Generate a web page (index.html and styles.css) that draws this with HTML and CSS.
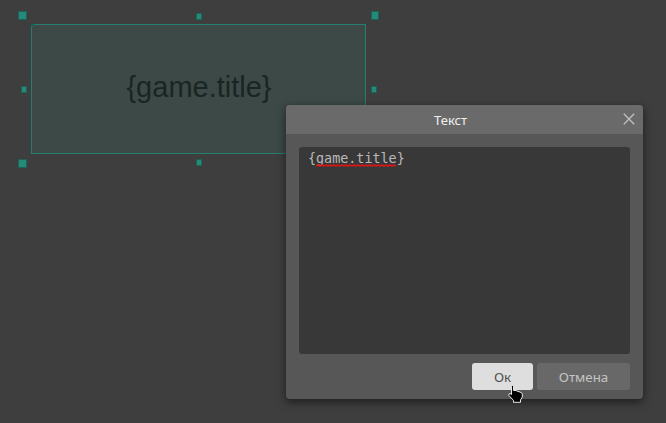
FILE: index.html
```
<!DOCTYPE html>
<html lang="ru">
<head>
<meta charset="utf-8">
<title>Текст</title>
<link rel="stylesheet" href="styles.css">
</head>
<body>
<main class="canvas">
  <div class="text-node"><span class="node-label">{game.title}</span><i class="origin"></i></div>
  <i class="handle corner nw"></i>
  <i class="handle corner ne"></i>
  <i class="handle corner sw"></i>
  <i class="handle edge n"></i>
  <i class="handle edge s"></i>
  <i class="handle edge w"></i>
  <i class="handle edge e"></i>
  <section class="dialog">
    <header class="dialog-header">
      <h1 class="dialog-title">Текст</h1>
      <svg class="close" viewBox="0 0 12 12"><path d="M.8.8 11.2 11.2M11.2.8.8 11.2"/></svg>
    </header>
    <div class="dialog-body">
      <div class="editor">{<span class="misspelled">game.title<svg class="squiggle" viewBox="0 0 80 3"><defs><pattern id="wave" width="4" height="3" patternUnits="userSpaceOnUse"><path d="M-1 1.5 0 2.3 2 .7 4 2.3 5 1.5"/></pattern></defs><rect width="80" height="3" fill="url(#wave)" stroke="none"/></svg></span>}</div>
      <footer class="actions">
        <button class="button primary">Ок</button>
        <button class="button">Отмена</button>
      </footer>
    </div>
  </section>
  <svg class="cursor" viewBox="0 0 15 18"><path d="M3.5 1.5Q4.5-.5 5.5 1.5V5.5L8 5.5 10 6.5 12 7 14.3 8.5V12L12.5 15V17.3H5.5V15.5L1 10.5Q.2 8.5 2 8.5L3.5 9.5Z"/></svg>
</main>
</body>
</html>
```

FILE: styles.css
```
* { box-sizing: border-box; }
body { margin: 0; background: #3e3e3e; font-family: "Noto Sans", "Open Sans", sans-serif; }
.canvas { position: relative; width: 666px; height: 423px; overflow: hidden; }

.text-node {
  position: absolute; left: 31px; top: 24px; width: 335px; height: 130px;
  display: flex; align-items: center; justify-content: center;
  background: #3c4946; border: 1px solid #267e70;
}
.node-label { padding: 0 0 4px 1px; font: 29px/34px "Liberation Sans", Arial, sans-serif; color: #182623; }
.origin { position: absolute; left: -1px; top: -1px; width: 3px; height: 3px; background: #1c6259; }

.handle { position: absolute; background: #238b78; border: 1px solid #1c6259; }
.corner { width: 9px; height: 9px; }
.edge { width: 5px; height: 7px; }
.nw { left: 18px; top: 11px; }
.ne { left: 371px; top: 11px; width: 8px; }
.sw { left: 18px; top: 159px; }
.n { left: 196px; top: 13px; width: 6px; }
.s { left: 196px; top: 159px; width: 6px; }
.w { left: 21px; top: 86px; width: 6px; }
.e { left: 371px; top: 86px; width: 6px; }

.dialog {
  position: absolute; left: 286px; top: 105px; width: 357px; height: 294px;
  background: #575757; border-radius: 4px;
  box-shadow: 0 3px 10px rgba(0, 0, 0, .55);
}
.dialog-header {
  height: 29px; padding-right: 8px; display: flex; align-items: center;
  background: #6a6a6a; border-radius: 4px 4px 0 0;
}
.dialog-title { flex: 1; margin: 0; padding-right: 8px; text-align: center; font-size: 13px; line-height: 18px; font-weight: 400; color: #f0f0f0; }
.close { width: 12px; height: 12px; margin-bottom: 2px; fill: none; stroke: #bdbdbd; stroke-width: 1.4; }
.dialog-body { padding: 13px; }
.editor {
  height: 207px; padding: 3px 8px 3px 9px; border-radius: 3px; background: #383838; color: #b8b8b8;
  font: 13.4px/18px "DejaVu Sans Mono", monospace;
}
.misspelled { position: relative; }
.squiggle { position: absolute; left: 0; bottom: -1px; width: 80px; height: 3px; fill: none; stroke: #f01010; stroke-width: 1.2; }
.actions { display: flex; justify-content: flex-end; gap: 4px; margin-top: 9px; }
.button {
  width: 93px; height: 27px; padding: 0; border: 0; border-radius: 3px;
  background: #686868; color: #c4c4c4; font: 13.33px/18px "Noto Sans", "Open Sans", sans-serif;
}
.primary { width: 61px; background: #dedede; color: #505050; }
.cursor { position: absolute; left: 508px; top: 385px; width: 15px; height: 18px; fill: #000; stroke: #e8e8e8; stroke-width: 1; }
```
